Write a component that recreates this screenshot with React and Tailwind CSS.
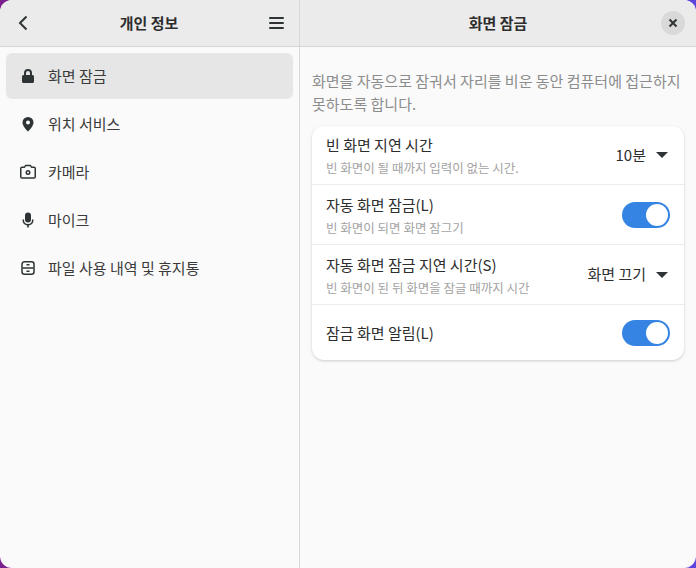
import React from "react";

const font = { fontFamily: '"Noto Sans CJK KR", "Noto Sans", sans-serif' };

const LockIcon = () => (
  <svg width="16" height="16" viewBox="0 0 16 16" fill="#2e3436">
    <path d="M8 1a4 4 0 0 0-4 4v2H3.500A1.500 1.500 0 0 0 2 8.500v5A1.500 1.500 0 0 0 3.500 15h9a1.500 1.500 0 0 0 1.500-1.500v-5A1.500 1.500 0 0 0 12.500 7H12V5a4 4 0 0 0-4-4zm0 2a2 2 0 0 1 2 2v2H6V5a2 2 0 0 1 2-2z" />
  </svg>
);

const PinIcon = () => (
  <svg width="16" height="16" viewBox="0 0 16 16" fill="#2e3436">
    <path fillRule="evenodd" d="M8 1a5.500 5.500 0 0 0-5.500 5.500C2.500 10 6 13.500 8 15.500c2-2 5.500-5.500 5.500-9A5.500 5.500 0 0 0 8 1zm0 3.500a2 2 0 1 1 0 4 2 2 0 0 1 0-4z" />
  </svg>
);

const CameraIcon = () => (
  <svg width="16" height="16" viewBox="0 0 16 16" fill="none" stroke="#2e3436" strokeWidth="1.500">
    <path d="M2 3.250h2.500l1-1.750h5l1 1.750H14a1.250 1.250 0 0 1 1.250 1.250v8.250A1.250 1.250 0 0 1 14 14H2A1.250 1.250 0 0 1 .75 12.750V4.500A1.250 1.250 0 0 1 2 3.250z" strokeLinejoin="round" />
    <circle cx="8" cy="8.500" r="1.750" />
  </svg>
);

const MicIcon = () => (
  <svg width="16" height="16" viewBox="0 0 16 16" fill="#2e3436">
    <rect x="5" y="0.500" width="6" height="10" rx="3" />
    <path d="M2.500 7.500v.5a5.500 5.500 0 0 0 4.700 5.400V15.500h1.600v-2.100A5.500 5.500 0 0 0 13.500 8v-.5H12V8a4 4 0 0 1-8 0v-.5z" />
  </svg>
);

const FileIcon = () => (
  <svg width="16" height="16" viewBox="0 0 16 16" fill="none" stroke="#2e3436" strokeWidth="1.500">
    <rect x="2" y="1.750" width="12" height="12.500" rx="2.500" />
    <path d="M6.500 4.750h3M2.500 8h11M6.500 11.250h3" />
  </svg>
);

const items = [
  { label: "화면 잠금", icon: <LockIcon />, active: true },
  { label: "위치 서비스", icon: <PinIcon /> },
  { label: "카메라", icon: <CameraIcon /> },
  { label: "마이크", icon: <MicIcon /> },
  { label: "파일 사용 내역 및 휴지통", icon: <FileIcon /> },
];

function Toggle() {
  return (
    <div className="w-[48px] h-[26px] rounded-full bg-[#3584e4] flex items-center justify-end pr-[2px]">
      <div className="w-[22px] h-[22px] rounded-full bg-white" />
    </div>
  );
}

function Caret() {
  return <div className="w-0 h-0 border-x-[6px] border-x-transparent border-t-[6px] border-t-[#2e3436]" />;
}

function Row({ title, sub, right, className }) {
  return (
    <div className={`flex items-center justify-between px-[14px] ${className}`}>
      <div className="flex flex-col">
        <div className={`text-[15px] leading-[20px] text-[#2e2e2e] ${sub ? "mt-[2px]" : ""}`}>{title}</div>
        {sub && <div className="text-[12.5px] leading-[18px] mt-[4px] text-[#a3a3a3]">{sub}</div>}
      </div>
      {right}
    </div>
  );
}

function Select({ value }) {
  return (
    <div className="flex items-center gap-[10px] pr-[2px] text-[15px] text-[#2e2e2e]">
      <span>{value}</span>
      <Caret />
    </div>
  );
}

export default function App() {
  return (
    <div
      style={font}
      className="w-[696px] h-[568px] overflow-hidden bg-gradient-to-r from-[#7a1f8e] to-[#5b45dc]"
    >
      <div className="w-full h-full flex rounded-[12px] overflow-hidden bg-[#fafafa]">
        {/* sidebar */}
        <div className="w-[300px] shrink-0 flex flex-col border-r border-[#d8d8d8]">
          <div className="h-[47px] shrink-0 flex items-center justify-between px-[16px] bg-[#ebebeb] border-b border-[#d6d6d6]">
            <svg width="16" height="16" viewBox="0 0 16 16" fill="none" stroke="#2e3436" strokeWidth="2">
              <path d="M10.500 1.500 4 8l6.500 6.500" />
            </svg>
            <span className="text-[15px] font-bold text-[#2e2e2e]">개인 정보</span>
            <svg width="18" height="16" viewBox="0 0 18 16" fill="#2e3436" className="mr-[-1px]">
              <rect x="3" y="2" width="15" height="2" rx="1" />
              <rect x="3" y="7" width="15" height="2" rx="1" />
              <rect x="3" y="12" width="15" height="2" rx="1" />
            </svg>
          </div>
          <div className="flex flex-col gap-[2px] pt-[6px] px-[6px]">
            {items.map((item) => (
              <div
                key={item.label}
                className={`h-[46px] flex items-center gap-[12px] pl-[14px] rounded-[6px] text-[15px] text-[#3a3a3a] ${
                  item.active ? "bg-[#e6e6e6]" : ""
                }`}
              >
                {item.icon}
                <span>{item.label}</span>
              </div>
            ))}
          </div>
        </div>

        {/* content */}
        <div className="flex-1 flex flex-col min-w-0">
          <div className="h-[47px] shrink-0 relative flex items-center justify-center bg-[#ebebeb] border-b border-[#d6d6d6]">
            <span className="text-[15px] font-bold text-[#2e2e2e]">화면 잠금</span>
            <div className="absolute right-[11px] top-[11px] w-[24px] h-[24px] rounded-full bg-[#d9d9d9] flex items-center justify-center">
              <svg width="10" height="10" viewBox="0 0 10 10" stroke="#2e3436" strokeWidth="2" fill="none">
                <path d="M1.500 1.500l7 7M8.500 1.500l-7 7" />
              </svg>
            </div>
          </div>
          <div className="px-[12px] pt-[22px]">
            <p className="text-[15px] leading-[23px] text-[#8c8c8c]">
              화면을 자동으로 잠궈서 자리를 비운 동안 컴퓨터에 접근하지 못하도록 합니다.
            </p>
            <div className="mt-[11px] rounded-[12px] bg-white shadow-[0_1px_3px_rgba(0,0,0,0.18)] divide-y divide-[#ececec]">
              <Row className="h-[59px]" title="빈 화면 지연 시간" sub="빈 화면이 될 때까지 입력이 없는 시간." right={<Select value="10분" />} />
              <Row className="h-[60px]" title="자동 화면 잠금(L)" sub="빈 화면이 되면 화면 잠그기" right={<Toggle />} />
              <Row className="h-[60px]" title="자동 화면 잠금 지연 시간(S)" sub="빈 화면이 된 뒤 화면을 잠글 때까지 시간" right={<Select value="화면 끄기" />} />
              <Row className="h-[55px]" title="잠금 화면 알림(L)" right={<Toggle />} />
            </div>
          </div>
        </div>
      </div>
    </div>
  );
}
